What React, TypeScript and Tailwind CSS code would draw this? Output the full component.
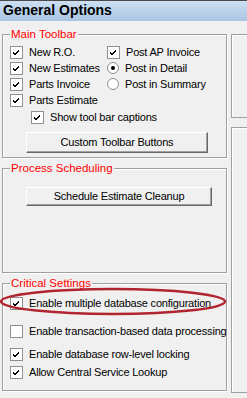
import React from "react";

const font = { fontFamily: '"Liberation Sans", Arial, sans-serif' };

const Check = ({ checked }: { checked: boolean }) => (
  <div className="w-[13px] h-[13px] shrink-0 border border-[#8e8f8f] bg-white">
    {checked && (
      <svg width="11" height="11" viewBox="0 0 11 11" shapeRendering="crispEdges">
        <polygon points="2,4.5 4,6.5 8,2.5 8,4.5 4,8.5 2,6.5" fill="#000" />
      </svg>
    )}
  </div>
);

const Radio = ({ checked }: { checked: boolean }) => (
  <div className="w-[12px] h-[12px] shrink-0 rounded-full border border-[#8e8f8f] bg-white flex items-center justify-center">
    {checked && <div className="w-[4px] h-[4px] rounded-full bg-black" />}
  </div>
);

const Row = ({
  label,
  checked,
  radio,
  className = "",
}: {
  label: string;
  checked: boolean;
  radio?: boolean;
  className?: string;
}) => (
  <div className={`flex items-center h-[16px] gap-[6px] ${className}`}>
    {radio ? <Radio checked={checked} /> : <Check checked={checked} />}
    <span className="text-[11px] leading-[16px] tracking-[-0.2px] text-black whitespace-nowrap">
      {label}
    </span>
  </div>
);

const WinButton = ({ label, className = "" }: { label: string; className?: string }) => (
  <div
    className={`flex items-center justify-center bg-[#f0f0f0] border border-t-white border-l-white border-b-[#696969] border-r-[#696969] shadow-[inset_-1px_-1px_0_#a0a0a0] text-[11px] tracking-[-0.2px] text-black ${className}`}
  >
    {label}
  </div>
);

const Group = ({
  title,
  className = "",
  children,
}: {
  title: string;
  className?: string;
  children?: React.ReactNode;
}) => (
  <fieldset
    className={`border border-[#a0a0a0] shadow-[inset_1px_1px_0_white,1px_1px_0_white] ${className}`}
  >
    <legend className="ml-[7px] px-[1px] bg-[#f0f0f0] text-[11.5px] leading-[14px] text-[#ff0000]">
      {title}
    </legend>
    {children}
  </fieldset>
);

export default function App() {
  return (
    <div
      className="relative w-[247px] h-[398px] overflow-hidden bg-[#f0f0f0]"
      style={font}
    >
      <div className="h-[21px] border-t border-[#4a4a4a] bg-gradient-to-b from-[#cddff2] to-[#a8c5e3] pl-[3px] text-[14px] font-bold leading-[19px] text-black">
        General Options
      </div>

      <div className="flex">
        <div className="ml-[2px] w-[236px] flex flex-col">
          <Group title="Main Toolbar" className="mt-[6px] h-[131px]">
            <div className="flex pt-[3px] pl-[7px]">
              <div className="flex flex-col w-[97px]">
                <Row label="New R.O." checked />
                <Row label="New Estimates" checked />
                <Row label="Parts Invoice" checked />
                <Row label="Parts Estimate" checked />
              </div>
              <div className="flex flex-col">
                <Row label="Post AP Invoice" checked />
                <Row label="Post in Detail" checked radio />
                <Row label="Post in Summary" checked={false} radio />
              </div>
            </div>
            <Row label="Show tool bar captions" checked className="mt-[1px] ml-[28px]" />
            <WinButton label="Custom Toolbar Buttons" className="mt-[7px] ml-[23px] w-[182px] h-[21px]" />
          </Group>

          <Group title="Process Scheduling" className="mt-[3px] h-[112px]">
            <WinButton label="Schedule Estimate Cleanup" className="mt-[12px] ml-[23px] w-[186px] h-[19px]" />
          </Group>

          <Group title="Critical Settings" className="mt-[3px] h-[115px]">
            <div className="flex flex-col pl-[7px]">
              <Row label="Enable multiple database configuration" checked className="mt-[5px]" />
              <Row label="Enable transaction-based data processing" checked={false} className="mt-[12px]" />
              <Row label="Enable database row-level locking" checked className="mt-[7px]" />
              <Row label="Allow Central Service Lookup" checked className="mt-[2px]" />
            </div>
          </Group>
        </div>

        <div className="ml-[4px] flex flex-col w-[20px]">
          <div className="mt-[13px] h-[84px] w-[30px] border border-[#a0a0a0] shadow-[inset_1px_1px_0_white]" />
          <div className="mt-[9px] h-[266px] w-[30px] border border-[#a0a0a0] shadow-[inset_1px_1px_0_white]" />
        </div>
      </div>

      <svg
        className="absolute left-0 top-[287px]"
        width="232"
        height="30"
        viewBox="0 0 232 30"
      >
        <ellipse cx="113" cy="14.5" rx="112" ry="12.5" fill="none" stroke="#b0252f" strokeWidth="2.5" />
      </svg>
    </div>
  );
}
